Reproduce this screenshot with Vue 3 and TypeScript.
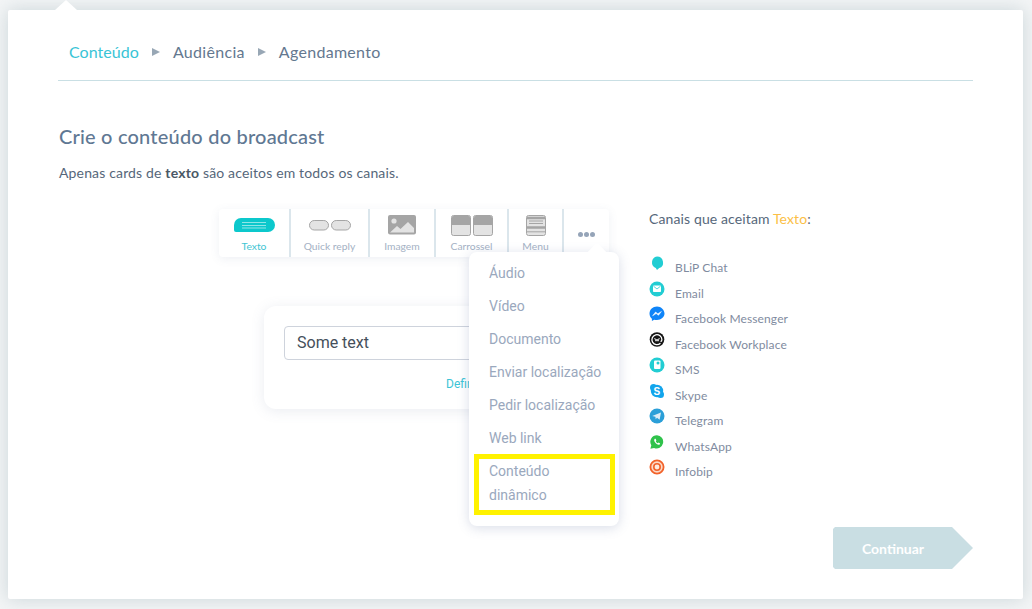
<script setup lang="ts">
// Broadcast wizard, first step: content editor with the "more" menu open.
const toolbar = [
  { key: 'text', label: 'Texto', active: true },
  { key: 'quick', label: 'Quick reply', active: false },
  { key: 'image', label: 'Imagem', active: false },
  { key: 'carousel', label: 'Carrossel', active: false },
  { key: 'menu', label: 'Menu', active: false },
]

const menuItems = ['Áudio', 'Vídeo', 'Documento', 'Enviar localização', 'Pedir localização', 'Web link']

const channels = [
  { key: 'blip', label: 'BLiP Chat' },
  { key: 'email', label: 'Email' },
  { key: 'messenger', label: 'Facebook Messenger' },
  { key: 'workplace', label: 'Facebook Workplace' },
  { key: 'sms', label: 'SMS' },
  { key: 'skype', label: 'Skype' },
  { key: 'telegram', label: 'Telegram' },
  { key: 'whatsapp', label: 'WhatsApp' },
  { key: 'infobip', label: 'Infobip' },
]
</script>

<template>
  <div class="page">
    <main class="panel">
      <nav class="steps">
        <span class="step current">Conteúdo</span>
        <i class="sep" />
        <span class="step">Audiência</span>
        <i class="sep" />
        <span class="step">Agendamento</span>
      </nav>

      <h1 class="title">Crie o conteúdo do broadcast</h1>
      <p class="intro">Apenas cards de <b>texto</b> são aceitos em todos os canais.</p>

      <div class="editor">
        <section class="compose">
          <div class="toolbar">
            <button v-for="item in toolbar" :key="item.key" class="tool" :class="[item.key, { active: item.active }]">
              <svg v-if="item.key === 'text'" width="41" height="14" viewBox="0 0 41 14">
                <path d="M7 0h27a7 7 0 0 1 0 14H2a2 2 0 0 1-2-2V7a7 7 0 0 1 7-7Z" fill="#0cc8cc" />
                <path d="M8 4.500h24M8 7.500h24M8 10h24" stroke="#8fe6e8" stroke-width="1" />
              </svg>
              <svg v-else-if="item.key === 'quick'" width="42" height="11" viewBox="0 0 42 11">
                <rect x=".5" y=".5" width="19" height="9.500" rx="4.700" fill="#e3e3e3" stroke="#a5a5a5" />
                <rect x="22.500" y=".5" width="19" height="9.500" rx="4.700" fill="#e3e3e3" stroke="#a5a5a5" />
              </svg>
              <svg v-else-if="item.key === 'image'" width="28" height="20" viewBox="0 0 28 20">
                <rect width="28" height="19.500" rx="2" fill="#a5a5a5" />
                <circle cx="6" cy="6" r="2.600" fill="#e3e3e3" />
                <path d="M2 17.500 9 11l3.500 3L20 7l6 6v4.500Z" fill="#e3e3e3" />
              </svg>
              <svg v-else-if="item.key === 'carousel'" width="42" height="21" viewBox="0 0 42 21">
                <rect x=".5" y=".5" width="19" height="20" rx="2" fill="#e3e3e3" stroke="#a5a5a5" />
                <path d="M1 10V2.500A1.500 1.500 0 0 1 2.500 1h15A1.500 1.500 0 0 1 19 2.500V10Z" fill="#a5a5a5" />
                <rect x="22.500" y=".5" width="19" height="20" rx="2" fill="#e3e3e3" stroke="#a5a5a5" />
                <path d="M23 10V2.500A1.500 1.500 0 0 1 24.500 1h15A1.500 1.500 0 0 1 41 2.500V10Z" fill="#a5a5a5" />
              </svg>
              <svg v-else width="20" height="21" viewBox="0 0 20 21">
                <rect x=".5" y=".5" width="19" height="20" rx="2" fill="#e3e3e3" stroke="#a5a5a5" />
                <path d="M1 3h18M1 12.500h18" stroke="#a5a5a5" stroke-width="2.500" />
                <path d="M3 6h14M3 8.500h14" stroke="#a5a5a5" stroke-width="1" />
                <path d="M1 16.800h18" stroke="#a5a5a5" stroke-width="1" />
              </svg>
              <span class="tool-label">{{ item.label }}</span>
            </button>
            <button class="tool more" aria-label="Mais">
              <i /><i /><i />
            </button>

            <ul class="dropdown">
              <li v-for="entry in menuItems" :key="entry" class="entry">{{ entry }}</li>
              <li class="entry marked">Conteúdo dinâmico</li>
            </ul>
          </div>

          <div class="card">
            <input class="field" value="Some text" />
            <a class="link">Definir</a>
          </div>
        </section>

        <aside class="channels">
          <p class="channels-title">Canais que aceitam <em>Texto</em>:</p>
          <ul class="channel-list">
            <li v-for="channel in channels" :key="channel.key" class="channel">
              <svg class="channel-icon" width="16" height="16" viewBox="0 0 16 16">
                <template v-if="channel.key === 'blip'">
                  <path d="M8 1.500a6 6 0 0 1 2.200 11.600L8 15l-1.200-2A6 6 0 0 1 8 1.500Z" fill="#22cdd3" />
                </template>
                <template v-else-if="channel.key === 'email'">
                  <circle cx="8" cy="8" r="7.500" fill="#22cdd3" />
                  <rect x="4" y="4.500" width="8" height="6.500" rx=".8" fill="#fff" />
                  <path d="m4.500 5.200 3.500 2.800 3.500-2.800" fill="none" stroke="#22cdd3" stroke-width=".8" />
                </template>
                <template v-else-if="channel.key === 'messenger'">
                  <path d="M8 .5C3.800.5.500 3.600.500 7.600c0 2.100.9 3.900 2.400 5.200V15l2.300-1.300c.9.300 1.800.4 2.800.4 4.200 0 7.500-3 7.500-6.500S12.200.5 8 .5Z" fill="#0f84f8" />
                  <path d="m3.600 9.800 3-3.800 2.200 1.800L12.400 5.500 9.500 9.300 7.200 7.600Z" fill="#fff" stroke="#fff" stroke-width=".5" stroke-linejoin="round" />
                </template>
                <template v-else-if="channel.key === 'workplace'">
                  <circle cx="8" cy="7.500" r="7.300" fill="#151515" />
                  <path d="M11.400 11.200a5 5 0 1 1 1.500-3.500c0 1.100-.6 1.800-1.400 1.800" fill="none" stroke="#fff" stroke-width="1.300" />
                  <path d="m5.700 6 1.300 3.200L8 7l1 2.200L10.300 6" fill="none" stroke="#fff" stroke-width=".9" />
                </template>
                <template v-else-if="channel.key === 'sms'">
                  <circle cx="8" cy="8" r="7.500" fill="#22cdd3" />
                  <path d="M5 4.500a1 1 0 0 1 1-1h4.500a1 1 0 0 1 1 1V11a1 1 0 0 1-1 1H6a1 1 0 0 1-1-1Z" fill="#fff" />
                  <circle cx="9" cy="6" r="1.500" fill="#22cdd3" />
                </template>
                <template v-else-if="channel.key === 'skype'">
                  <circle cx="4.500" cy="4.500" r="3.500" fill="#12a5ec" />
                  <circle cx="11.500" cy="11.500" r="3.500" fill="#12a5ec" />
                  <circle cx="8" cy="8" r="6.200" fill="#12a5ec" />
                  <text x="8" y="11.500" class="skype-s">S</text>
                </template>
                <template v-else-if="channel.key === 'telegram'">
                  <circle cx="8" cy="8" r="7.500" fill="#2b9fd8" />
                  <path d="m3.200 8 8.800-3.600-1.400 7.400-2.600-2-1.300 1.400-.3-2.400Z" fill="#dcecf6" />
                </template>
                <template v-else-if="channel.key === 'whatsapp'">
                  <path d="M8 1.200a6.600 6.600 0 0 0-5.700 10L1.400 14.800l3.700-.9A6.600 6.600 0 1 0 8 1.200Z" fill="#2fc24b" />
                  <path d="M5.800 4.800c-.9.800-.8 2 .2 3.400 1 1.400 2.500 2.600 3.800 2.500.8-.1 1.300-.7 1.300-1.300l-1.600-.9-.7.700c-.8-.3-1.600-1.100-2-2l.6-.8-.8-1.700Z" fill="#fff" />
                </template>
                <template v-else>
                  <circle cx="8" cy="8" r="6.600" fill="#fbd9c8" stroke="#f2622a" stroke-width="1.800" />
                  <circle cx="8" cy="8" r="3.200" fill="#fde9df" stroke="#f2622a" stroke-width="1.600" />
                </template>
              </svg>
              <span>{{ channel.label }}</span>
            </li>
          </ul>
        </aside>
      </div>

      <footer class="actions">
        <button class="next">Continuar</button>
      </footer>
    </main>
  </div>
</template>

<style>
html, body { margin: 0; background: #f3f5f6; }
</style>

<style scoped>
* { box-sizing: border-box; }

.page {
  height: 609px;
  padding: 10px 9px 10px 8px;
  overflow: hidden;
  font-family: Lato, "Noto Sans", sans-serif;
}

.panel {
  position: relative;
  display: flex;
  flex-direction: column;
  height: 589px;
  padding: 0 50px 30px;
  background: #fff;
  border-radius: 2px;
  box-shadow: 0 0 18px rgba(110, 140, 150, 0.3);
}

/* little notch pointing at the current step */
.panel::before {
  content: "";
  position: absolute;
  top: -10px;
  left: 47px;
  border-left: 11px solid transparent;
  border-right: 11px solid transparent;
  border-bottom: 10px solid #fff;
}

.steps {
  display: flex;
  align-items: center;
  height: 71px;
  padding: 12px 0 0 11px;
  border-bottom: 1px solid #c9dfe4;
  font-size: 16px;
  color: #64788f;
}

.step { letter-spacing: 0.3px; }
.step.current { letter-spacing: 0.05px; color: #39c4d6; }

.sep {
  margin: 1px 13px 0;
  border-left: 8px solid #98a7b5;
  border-top: 4px solid transparent;
  border-bottom: 4px solid transparent;
}

.title {
  margin: 41px 0 0 1px;
  font-size: 20px;
  line-height: 28px;
  font-weight: 500;
  letter-spacing: 0.2px;
  color: #5f7893;
}

.intro {
  margin: 13px 0 0 1px;
  font-size: 14px;
  line-height: 20px;
  letter-spacing: 0.155px;
  color: #56677a;
}

.intro b { color: #4a5866; }

.editor {
  display: grid;
  grid-template-columns: 591px 1fr;
  margin-top: 26px;
}

.compose { padding-left: 161px; }

.toolbar {
  position: relative;
  display: flex;
  width: 390px;
  height: 48px;
  background: #fff;
  border-radius: 4px;
  box-shadow: 0 2px 10px rgba(90, 110, 150, 0.1);
}

.tool {
  display: flex;
  flex-direction: column;
  align-items: center;
  height: 48px;
  padding: 0;
  background: none;
  border: 0;
  border-right: 2px solid #dbe6ec;
  font: inherit;
}

.text { width: 72px; padding-top: 9px; }
.quick { width: 79px; padding-top: 11px; }
.image { width: 66px; padding-top: 6px; }
.carousel { width: 73px; padding-top: 6px; }
.menu { width: 55px; padding-top: 6px; }

.tool-label {
  position: absolute;
  top: 30px;
  font-size: 10.300px;
  line-height: 14px;
  color: #a4b1c4;
}

.active .tool-label { color: #3fc5d3; }

.more {
  flex: 1;
  flex-direction: row;
  align-items: flex-start;
  justify-content: center;
  gap: 1px;
  padding: 23px 0 0;
  border-right: 0;
}

.more i {
  width: 5px;
  height: 5px;
  border-radius: 50%;
  background: #95a4b8;
}

.dropdown {
  position: absolute;
  z-index: 2;
  top: 43px;
  left: 250px;
  width: 150px;
  margin: 0;
  padding: 4px 0 11px;
  list-style: none;
  background: #fff;
  border-radius: 8px;
  box-shadow: 0 2px 12px rgba(80, 100, 150, 0.22);
  font-family: Roboto, sans-serif;
  font-size: 14px;
  color: #9aa8bd;
}

.dropdown::before {
  content: "";
  position: absolute;
  top: -6px;
  left: 120px;
  width: 16px;
  height: 16px;
  background: #fff;
  border-radius: 3px;
  transform: rotate(45deg);
}

.entry {
  position: relative;
  height: 33px;
  padding: 0 8px 0 20px;
  line-height: 35px;
  white-space: nowrap;
}

.marked {
  height: 61px;
  margin: 0 4px 0 5px;
  padding: 0 10px;
  line-height: 24px;
  white-space: normal;
  border: 5px solid #fff200;
}

.card {
  width: 340px;
  height: 103px;
  margin: 49px 0 0 45px;
  padding: 20px;
  background: #fff;
  border-radius: 12px;
  box-shadow: 0 2px 14px rgba(90, 110, 150, 0.13);
}

.field {
  display: block;
  width: 100%;
  height: 34px;
  padding: 0 12px 2px;
  border: 1px solid #ced3dc;
  border-radius: 4px;
  outline: 0;
  font-family: Roboto, sans-serif;
  font-size: 16px;
  color: #454f5b;
}

.link {
  display: block;
  margin: 17px 0 0 162px;
  font-family: Roboto, sans-serif;
  font-size: 12px;
  line-height: 14px;
  color: #3cc4d6;
}

.channels-title {
  margin: 0;
  font-size: 14px;
  line-height: 20px;
  letter-spacing: 0.12px;
  color: #56677a;
}

.channels-title em {
  font-style: normal;
  color: #fbbf47;
}

.channel-list {
  margin: 26px 0 0;
  padding: 0;
  list-style: none;
}

.channel {
  display: flex;
  height: 25.500px;
  font-size: 12px;
  line-height: 16px;
  letter-spacing: 0.12px;
  color: #7f8ba0;
}

.channel span { padding: 5px 0 0 10px; }
.channel-icon { flex: none; }

.skype-s {
  font-family: "Liberation Sans", sans-serif;
  font-size: 10px;
  font-weight: 700;
  fill: #fff;
  text-anchor: middle;
}

.actions {
  display: flex;
  justify-content: flex-end;
  margin-top: auto;
}

.next {
  width: 140px;
  height: 42px;
  padding: 0 20px 0 0;
  border: 0;
  background: #c9dee3;
  clip-path: polygon(2px 0, 119px 0, 140px 21px, 119px 42px, 2px 42px, 0 40px, 0 2px);
  font: inherit;
  font-size: 14px;
  font-weight: 700;
  color: #fff;
}
</style>
